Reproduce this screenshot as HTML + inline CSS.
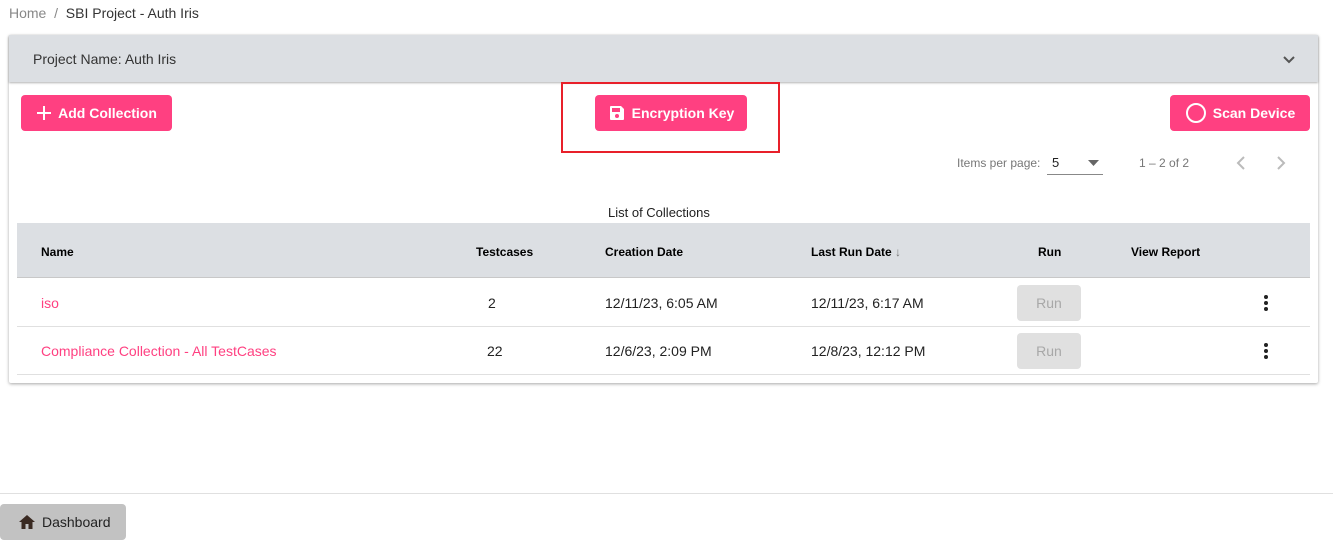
<!DOCTYPE html>
<html><head><style>
*{box-sizing:border-box;margin:0;padding:0}
body{width:1333px;height:546px;background:#fff;font-family:"Liberation Sans",Arial,sans-serif;position:relative;overflow:hidden;color:#212121}
.a{position:absolute;white-space:nowrap}
.btn{position:absolute;background:#ff4081;color:#fff;border-radius:4px;font-weight:bold;font-size:14px;display:flex;align-items:center;justify-content:center;gap:6px}
.th{font-size:12px;font-weight:bold;color:#000}
.td{font-size:14px;color:#222}
.pink{color:#ff4081}
.run{position:absolute;width:64px;height:36px;background:#e0e0e0;border-radius:4px;color:#a8a8a8;font-size:14px;display:flex;align-items:center;justify-content:center}
.dots{position:absolute;width:4px}
.dots i{display:block;width:4px;height:4px;border-radius:50%;background:#222;margin-bottom:2px}
</style></head><body>
<div class="a" style="left:9px;top:5px;font-size:14px;color:#888">Home &nbsp;/&nbsp; <span style="color:#333">SBI Project - Auth Iris</span></div>
<div class="a" style="left:9px;top:35px;width:1309px;height:348px;box-shadow:0 1px 3px rgba(0,0,0,.35);border-radius:2px;background:#fff"></div>
<div class="a" style="left:9px;top:35px;width:1309px;height:47px;background:#dcdfe3;box-shadow:0 1px 2px rgba(0,0,0,.3)"></div>
<div class="a" style="left:33px;top:51px;font-size:14px;color:#333">Project Name: Auth Iris</div>
<svg class="a" style="left:1282px;top:55px" width="14" height="10" viewBox="0 0 14 10"><path d="M2 2l5 5 5-5" stroke="#555" stroke-width="2" fill="none"/></svg>
<div class="btn" style="left:21px;top:95px;width:151px;height:36px"><svg width="16" height="16" viewBox="0 0 16 16"><path d="M8 1v14M1 8h14" stroke="#fff" stroke-width="2"/></svg>Add Collection</div>
<div class="a" style="left:561px;top:82px;width:219px;height:71px;border:2px solid #e8202a"></div>
<div class="btn" style="left:595px;top:95px;width:152px;height:36px"><svg width="18" height="18" viewBox="0 0 18 18"><path d="M2 3a1 1 0 0 1 1-1h10l3 3v10a1 1 0 0 1-1 1H3a1 1 0 0 1-1-1z" fill="#fff"/><rect x="4" y="4" width="8" height="4" fill="#ff4081"/><circle cx="9" cy="12" r="2" fill="#ff4081"/></svg>Encryption Key</div>
<div class="btn" style="left:1170px;top:95px;width:140px;height:36px"><svg width="22" height="22" viewBox="0 0 22 22"><circle cx="11" cy="11" r="9" stroke="#fff" stroke-width="2" fill="none"/></svg>Scan Device</div>
<div class="a" style="left:957px;top:156px;font-size:12px;color:#777">Items per page:</div>
<div class="a" style="left:1052px;top:155px;font-size:13px;color:#222">5</div>
<svg class="a" style="left:1088px;top:160px" width="12" height="6"><path d="M0 0h11L5.5 6z" fill="#666"/></svg>
<div class="a" style="left:1047px;top:174px;width:56px;height:1px;background:#888"></div>
<div class="a" style="left:1139px;top:156px;font-size:12px;color:#777">1 – 2 of 2</div>
<svg class="a" style="left:1235px;top:155px" width="12" height="16"><path d="M9 2L3 8l6 6" stroke="#bbb" stroke-width="2" fill="none"/></svg>
<svg class="a" style="left:1275px;top:155px" width="12" height="16"><path d="M3 2l6 6-6 6" stroke="#bbb" stroke-width="2" fill="none"/></svg>
<div class="a" style="left:608px;top:205px;font-size:13px;color:#222">List of Collections</div>
<div class="a" style="left:17px;top:223px;width:1293px;height:55px;background:#dcdfe3;border-bottom:1px solid #c8c8c8"></div>
<div class="a th" style="left:41px;top:245px">Name</div>
<div class="a th" style="left:476px;top:245px">Testcases</div>
<div class="a th" style="left:605px;top:245px">Creation Date</div>
<div class="a th" style="left:811px;top:245px">Last Run Date <span style="color:#777;font-weight:normal">&#8595;</span></div>
<div class="a th" style="left:1038px;top:245px">Run</div>
<div class="a th" style="left:1131px;top:245px">View Report</div>
<div class="a" style="left:17px;top:326px;width:1293px;height:1px;background:#e0e0e0"></div>
<div class="a" style="left:17px;top:374px;width:1293px;height:1px;background:#e0e0e0"></div>
<div class="a td pink" style="left:41px;top:295px">iso</div>
<div class="a td" style="left:488px;top:295px">2</div>
<div class="a td" style="left:605px;top:295px">12/11/23, 6:05 AM</div>
<div class="a td" style="left:811px;top:295px">12/11/23, 6:17 AM</div>
<div class="run" style="left:1017px;top:285px">Run</div>
<div class="dots" style="left:1264px;top:295px"><i></i><i></i><i></i></div>
<div class="a td pink" style="left:41px;top:343px">Compliance Collection - All TestCases</div>
<div class="a td" style="left:487px;top:343px">22</div>
<div class="a td" style="left:605px;top:343px">12/6/23, 2:09 PM</div>
<div class="a td" style="left:811px;top:343px">12/8/23, 12:12 PM</div>
<div class="run" style="left:1017px;top:333px">Run</div>
<div class="dots" style="left:1264px;top:343px"><i></i><i></i><i></i></div>
<div class="a" style="left:0;top:493px;width:1333px;height:1px;background:#e0e0e0"></div>
<div class="a" style="left:0;top:504px;width:126px;height:36px;background:#c2c2c2;border-radius:4px;display:flex;align-items:center;padding-left:18px;gap:6px;font-size:14px;color:#222"><svg width="18" height="16" viewBox="0 0 18 16"><path d="M9 1L1 8h2.5v7h4v-5h3v5h4V8H17z" fill="#3a2a22"/></svg>Dashboard</div>
</body></html>
